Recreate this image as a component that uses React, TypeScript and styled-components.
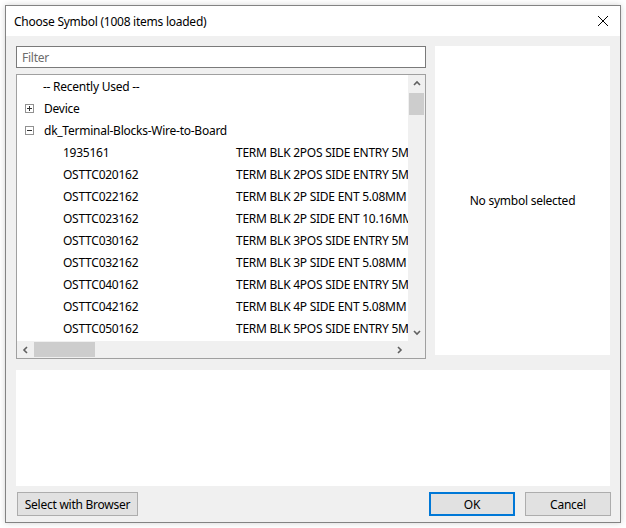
import React from "react";
import styled, { createGlobalStyle } from "styled-components";

const Global = createGlobalStyle`
  html, body { margin: 0; padding: 0; background: #ffffff; }
  body { font-family: "Noto Sans", "Liberation Sans", sans-serif; font-size: 12px; letter-spacing: -0.25px; color: #000; }
  * { box-sizing: border-box; }
`;

const Page = styled.div`
  width: 626px;
  height: 528px;
  padding: 5px 5px 0 5px;
  background: #ffffff;
`;

const Window = styled.div`
  width: 616px;
  height: 518px;
  border: 1px solid #838383;
  box-shadow: 0 0 6px rgba(0, 0, 0, 0.18);
  display: flex;
  flex-direction: column;
  background: #f0f0f0;
`;

const TitleBar = styled.div`
  height: 30px;
  background: #ffffff;
  display: flex;
  align-items: center;
  justify-content: space-between;
  padding: 0 10px 0 8px;
  font-size: 12px;
`;

const Title = styled.span``;

const CloseBtn = styled.div`
  width: 14px;
  height: 14px;
  display: flex;
  align-items: center;
  justify-content: center;
`;

const Body = styled.div`
  flex: 1;
  display: flex;
  flex-direction: column;
  padding: 10px 9px 5px 10px;
`;

const TopArea = styled.div`
  display: grid;
  grid-template-columns: 410px 175px;
  column-gap: 9px;
  height: 314px;
`;

const LeftCol = styled.div`
  display: flex;
  flex-direction: column;
  gap: 6px;
`;

const FilterInput = styled.div`
  height: 22px;
  border: 1px solid #7a7a7a;
  background: #ffffff;
  display: flex;
  align-items: center;
  padding-left: 5px;
  color: #6d6d6d;
`;

const ListBox = styled.div`
  height: 285px;
  border: 1px solid #a0a0a0;
  background: #ffffff;
  display: grid;
  grid-template-columns: 391px 17px;
  grid-template-rows: 266px 17px;
  overflow: hidden;
`;

const Viewport = styled.div`
  overflow: hidden;
  position: relative;
`;

const Row = styled.div<{ $indent: number }>`
  height: 22px;
  display: flex;
  align-items: center;
  white-space: nowrap;
  padding-left: ${(p) => p.$indent}px;
  width: 600px;
`;

const Expander = styled.div`
  width: 9px;
  height: 9px;
  border: 1px solid #919191;
  margin-right: 10px;
  margin-left: -18px;
  display: flex;
  align-items: center;
  justify-content: center;
  flex: none;
`;

const Name = styled.span`
  width: 173px;
  flex: none;
`;

const Desc = styled.span``;

const VScroll = styled.div`
  background: #f0f0f0;
  display: flex;
  flex-direction: column;
  align-items: center;
`;

const HScroll = styled.div`
  background: #f0f0f0;
  display: flex;
  align-items: center;
`;

const Corner = styled.div`
  background: #f0f0f0;
`;

const ArrowBox = styled.div<{ $w: number; $h: number }>`
  width: ${(p) => p.$w}px;
  height: ${(p) => p.$h}px;
  display: flex;
  align-items: center;
  justify-content: center;
  flex: none;
`;

const VThumb = styled.div`
  width: 15px;
  height: 22px;
  background: #cdcdcd;
  margin-top: 1px;
`;

const VSpacer = styled.div`
  flex: 1;
`;

const HThumb = styled.div`
  width: 61px;
  height: 15px;
  background: #cdcdcd;
`;

const PreviewPanel = styled.div`
  height: 309px;
  background: #ffffff;
  display: flex;
  align-items: center;
  justify-content: center;
  padding-bottom: 1px;
`;

const InfoPanel = styled.div`
  margin-top: 10px;
  height: 116px;
  background: #ffffff;
  width: 594px;
`;

const ButtonRow = styled.div`
  margin-top: 6px;
  display: flex;
  align-items: center;
  padding-left: 1px;
`;

const Button = styled.div<{ $w: number; $primary?: boolean }>`
  width: ${(p) => p.$w}px;
  height: 24px;
  background: #e1e1e1;
  border: ${(p) => (p.$primary ? "2px solid #0078d7" : "1px solid #adadad")};
  display: flex;
  align-items: center;
  justify-content: center;
`;

const Spacer = styled.div`
  flex: 1;
`;

const Gap = styled.div<{ $w: number }>`
  width: ${(p) => p.$w}px;
`;

const Chevron = ({ dir }: { dir: "up" | "down" | "left" | "right" }) => {
  const d = {
    up: "M1 5 L4 2 L7 5",
    down: "M1 2 L4 5 L7 2",
    left: "M5 1 L2 4 L5 7",
    right: "M2 1 L5 4 L2 7",
  }[dir];
  const w = dir === "up" || dir === "down" ? 8 : 7;
  const h = dir === "up" || dir === "down" ? 7 : 8;
  return (
    <svg width={w} height={h} viewBox={`0 0 ${w} ${h}`}>
      <path d={d} fill="none" stroke="#606060" strokeWidth="1.6" />
    </svg>
  );
};

const items: [string, string][] = [
  ["1935161", "TERM BLK 2POS SIDE ENTRY 5MM PCB"],
  ["OSTTC020162", "TERM BLK 2POS SIDE ENTRY 5MM PCB"],
  ["OSTTC022162", "TERM BLK 2P SIDE ENT 5.08MM PCB"],
  ["OSTTC023162", "TERM BLK 2P SIDE ENT 10.16MM PCB"],
  ["OSTTC030162", "TERM BLK 3POS SIDE ENTRY 5MM PCB"],
  ["OSTTC032162", "TERM BLK 3P SIDE ENT 5.08MM PCB"],
  ["OSTTC040162", "TERM BLK 4POS SIDE ENTRY 5MM PCB"],
  ["OSTTC042162", "TERM BLK 4P SIDE ENT 5.08MM PCB"],
  ["OSTTC050162", "TERM BLK 5POS SIDE ENTRY 5MM PCB"],
  ["OSTTC052162", "TERM BLK 5P SIDE ENT 5.08MM PCB"],
];

const PlusMinus = ({ plus }: { plus: boolean }) => (
  <svg width="7" height="7" viewBox="0 0 7 7">
    <path d="M1 3.5 H6" stroke="#333" strokeWidth="1" />
    {plus && <path d="M3.5 1 V6" stroke="#333" strokeWidth="1" />}
  </svg>
);

export default function App() {
  return (
    <>
      <Global />
      <Page>
        <Window>
          <TitleBar>
            <Title>Choose Symbol (1008 items loaded)</Title>
            <CloseBtn>
              <svg width="12" height="12" viewBox="0 0 12 12">
                <path d="M1 1 L11 11 M11 1 L1 11" stroke="#000" strokeWidth="1" />
              </svg>
            </CloseBtn>
          </TitleBar>
          <Body>
            <TopArea>
              <LeftCol>
                <FilterInput>Filter</FilterInput>
                <ListBox>
                  <Viewport>
                    <Row $indent={26}>-- Recently Used --</Row>
                    <Row $indent={26}>
                      <Expander>
                        <PlusMinus plus />
                      </Expander>
                      Device
                    </Row>
                    <Row $indent={26}>
                      <Expander>
                        <PlusMinus plus={false} />
                      </Expander>
                      dk_Terminal-Blocks-Wire-to-Board
                    </Row>
                    {items.map(([n, d]) => (
                      <Row key={n} $indent={46}>
                        <Name>{n}</Name>
                        <Desc>{d}</Desc>
                      </Row>
                    ))}
                  </Viewport>
                  <VScroll>
                    <ArrowBox $w={17} $h={17}>
                      <Chevron dir="up" />
                    </ArrowBox>
                    <VThumb />
                    <VSpacer />
                    <ArrowBox $w={17} $h={17}>
                      <Chevron dir="down" />
                    </ArrowBox>
                  </VScroll>
                  <HScroll>
                    <ArrowBox $w={17} $h={17}>
                      <Chevron dir="left" />
                    </ArrowBox>
                    <HThumb />
                    <Spacer />
                    <ArrowBox $w={17} $h={17}>
                      <Chevron dir="right" />
                    </ArrowBox>
                  </HScroll>
                  <Corner />
                </ListBox>
              </LeftCol>
              <PreviewPanel>No symbol selected</PreviewPanel>
            </TopArea>
            <InfoPanel />
            <ButtonRow>
              <Button $w={121}>Select with Browser</Button>
              <Spacer />
              <Button $w={86} $primary>
                OK
              </Button>
              <Gap $w={10} />
              <Button $w={86}>Cancel</Button>
            </ButtonRow>
          </Body>
        </Window>
      </Page>
    </>
  );
}
